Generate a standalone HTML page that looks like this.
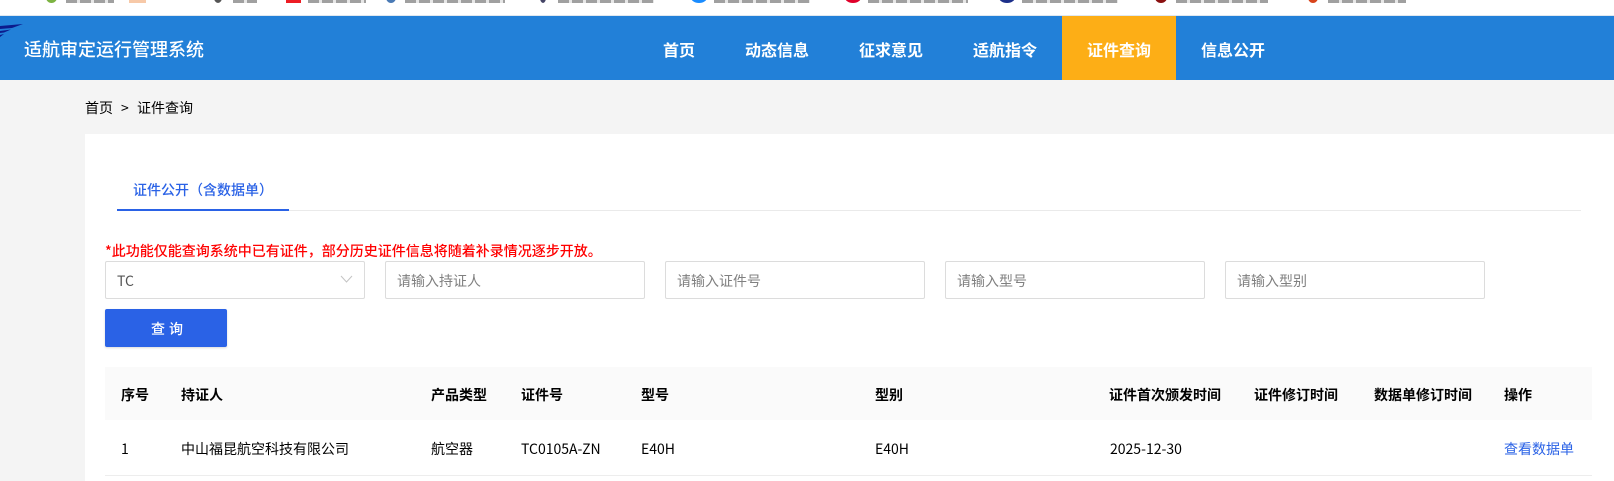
<!DOCTYPE html>
<html lang="zh">
<head>
<meta charset="utf-8">
<title>适航审定运行管理系统</title>
<style>
*{box-sizing:border-box}
html,body{margin:0;padding:0;width:1614px;height:481px;overflow:hidden;background:#f4f4f4;font-family:"Noto Sans CJK SC","Liberation Sans",sans-serif;color:#000}
.a{position:absolute;white-space:nowrap}
.top{left:0;top:0;width:1614px;height:16px;background:#fff;border-bottom:1px solid #dfe8f0}
.b{position:absolute;top:0;height:3px;background:repeating-linear-gradient(90deg,#777 0,#777 11px,#ddd 11px,#ddd 14px);opacity:.7}
.i{position:absolute;top:-8px;height:11px;border-radius:50%}
.hd{left:0;top:16px;width:1614px;height:64px;background:#2280d8}
.title{left:24px;top:36px;font-size:18px;line-height:26px;color:#fff;font-weight:500}
.nav{top:37px;font-size:16px;line-height:24px;font-weight:700;color:#fff}
.act{left:1062px;top:16px;width:114px;height:64px;background:#fdae16}
.crumb{left:85px;top:98px;font-size:14px;line-height:20px;color:#000}
.card{left:85px;top:134px;width:1529px;height:347px;background:#fff}
.tab{left:133px;top:180px;font-size:14px;line-height:20px;color:#2a62e6;font-weight:500}
.tl{left:117px;top:210px;width:1464px;height:1px;background:#eaeaea}
.tb{left:117px;top:209px;width:172px;height:2px;background:#2a62e6}
.warn{left:105px;top:241px;font-size:14px;line-height:20px;color:#f00;font-weight:500}
.inp{top:261px;width:260px;height:38px;border:1px solid #dcdcdc;border-radius:2px;background:#fff;font-size:14px;line-height:38px;padding-left:11px;color:#808080}
.btn{left:105px;top:309px;width:122px;height:38px;background:#2a62e6;border-radius:2px;color:#fff;font-size:14px;line-height:40px;text-align:center;letter-spacing:4px;font-weight:500;padding-left:6px;box-shadow:0 1px 2px rgba(0,0,0,.15)}
.th{left:105px;top:367px;width:1487px;height:53px;background:#fafafa}
.rl{left:105px;top:475px;width:1487px;height:1px;background:#ededed}
.h{top:385px;font-size:14px;line-height:20px;font-weight:700;color:#000}
.c{top:439px;font-size:14px;line-height:20px;color:#000}
</style>
</head>
<body>
<div class="a top"></div>
<div class="i" style="left:46px;width:11px;background:#7cb342"></div>
<div class="b" style="left:66px;width:48px"></div>
<div class="b" style="left:129px;width:17px;background:#f3b283"></div>
<div class="i" style="left:214px;width:8px;background:#555"></div>
<div class="b" style="left:233px;width:24px"></div>
<div class="b" style="left:286px;width:15px;background:#ed1c24;opacity:1"></div>
<div class="b" style="left:308px;width:58px"></div>
<div class="i" style="left:386px;width:10px;background:#4a7ab5"></div>
<div class="b" style="left:405px;width:100px"></div>
<div class="i" style="left:540px;width:6px;background:#446"></div>
<div class="b" style="left:558px;width:96px"></div>
<div class="i" style="left:691px;width:16px;background:#1a8cff"></div>
<div class="b" style="left:714px;width:96px"></div>
<div class="i" style="left:845px;width:16px;background:#e0002a"></div>
<div class="b" style="left:868px;width:100px"></div>
<div class="i" style="left:999px;width:16px;background:#1c2f8a"></div>
<div class="b" style="left:1022px;width:96px"></div>
<div class="i" style="left:1155px;width:12px;background:#8a1010"></div>
<div class="b" style="left:1176px;width:92px"></div>
<div class="i" style="left:1308px;width:10px;background:#d8441c"></div>
<div class="b" style="left:1328px;width:78px"></div>

<div class="a hd"></div>
<svg class="a" style="left:0;top:22px" width="26" height="18" viewBox="0 0 26 18"><path d="M0 4 L23 2 L12 6 L0 7Z M0 9 L11 7.5 L4 10.5 L0 11Z M0 13 L4 12 L0 15Z" fill="#0c1a8c"/></svg>
<div class="a title">适航审定运行管理系统</div>
<div class="a act"></div>
<div class="a nav" style="left:663px">首页</div>
<div class="a nav" style="left:745px">动态信息</div>
<div class="a nav" style="left:859px">征求意见</div>
<div class="a nav" style="left:973px">适航指令</div>
<div class="a nav" style="left:1087px">证件查询</div>
<div class="a nav" style="left:1201px">信息公开</div>

<div class="a crumb">首页</div>
<div class="a crumb" style="left:121px">&gt;</div>
<div class="a crumb" style="left:137px">证件查询</div>
<div class="a card"></div>
<div class="a tab">证件公开（含数据单）</div>
<div class="a tl"></div>
<div class="a tb"></div>
<div class="a warn">*此功能仅能查询系统中已有证件，部分历史证件信息将随着补录情况逐步开放。</div>

<div class="a inp" style="left:105px;color:#555">TC</div>
<svg class="a" style="left:340px;top:275px" width="13" height="8" viewBox="0 0 13 8"><path d="M1 1 L6.5 7 L12 1" fill="none" stroke="#c4c4c4" stroke-width="1"/></svg>
<div class="a inp" style="left:385px">请输入持证人</div>
<div class="a inp" style="left:665px">请输入证件号</div>
<div class="a inp" style="left:945px">请输入型号</div>
<div class="a inp" style="left:1225px">请输入型别</div>
<div class="a btn">查询</div>

<div class="a th"></div>
<div class="a h" style="left:121px">序号</div>
<div class="a h" style="left:181px">持证人</div>
<div class="a h" style="left:431px">产品类型</div>
<div class="a h" style="left:521px">证件号</div>
<div class="a h" style="left:641px">型号</div>
<div class="a h" style="left:875px">型别</div>
<div class="a h" style="left:1109px">证件首次颁发时间</div>
<div class="a h" style="left:1254px">证件修订时间</div>
<div class="a h" style="left:1374px">数据单修订时间</div>
<div class="a h" style="left:1504px">操作</div>

<div class="a c" style="left:121px">1</div>
<div class="a c" style="left:181px">中山福昆航空科技有限公司</div>
<div class="a c" style="left:431px">航空器</div>
<div class="a c" style="left:521px">TC0105A-ZN</div>
<div class="a c" style="left:641px">E40H</div>
<div class="a c" style="left:875px">E40H</div>
<div class="a c" style="left:1110px">2025-12-30</div>
<div class="a c" style="left:1504px;color:#2a62e6">查看数据单</div>
<div class="a rl"></div>
</body>
</html>
